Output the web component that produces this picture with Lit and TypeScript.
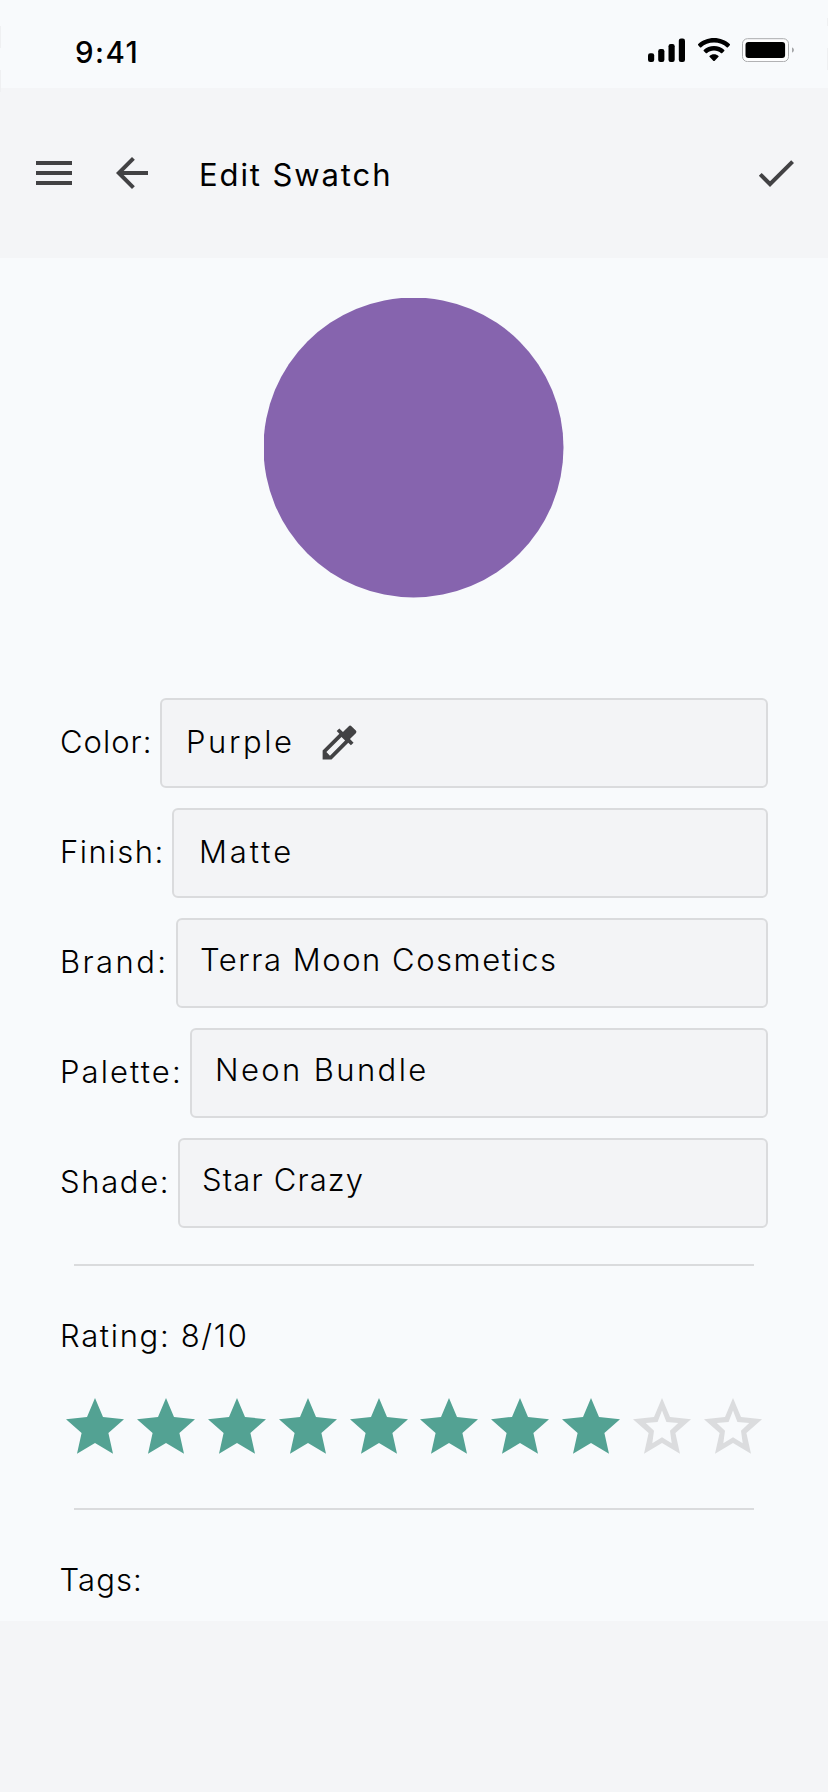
import { LitElement, html, css, svg } from "lit";
import { customElement, property } from "lit/decorators.js";

@customElement("swatch-field")
class SwatchField extends LitElement {
  static styles = css`
    :host { display: flex; height: 90px; }
    .label {
      flex: none;
      box-sizing: border-box;
      height: 90px;
      line-height: 88px;
      white-space: nowrap;
    }
    .box {
      flex: 1;
      box-sizing: border-box;
      height: 90px;
      border: 2px solid #dadbdd;
      border-radius: 6px;
      background: #f3f4f6;
      display: flex;
      white-space: nowrap;
      line-height: 84px;
    }
    .raised { line-height: 80px; }
    ::slotted(svg) { flex: none; }
  `;
  @property() label = "";
  @property() value = "";
  @property({ type: Number }) labelWidth = 100;
  @property({ type: Number }) labelSpacing = 0;
  @property({ type: Number }) valueSpacing = 0;
  @property({ type: Number }) inset = 24;
  @property({ type: Boolean }) raised = false;

  render() {
    return html`
      <div class="label" style="width:${this.labelWidth}px;letter-spacing:${this.labelSpacing}px">${this.label}</div>
      <div class="box ${this.raised ? "raised" : ""}" style="padding-left:${this.inset}px">
        <span style="letter-spacing:${this.valueSpacing}px">${this.value}</span><slot></slot>
      </div>`;
  }
}

const FIELDS = [
  { label: "Color:", value: "Purple", w: 100, ls: 1, vs: 2.6, inset: 24, raised: false, picker: true },
  { label: "Finish:", value: "Matte", w: 112, ls: 1.55, vs: 2.95, inset: 25, raised: false, picker: false },
  { label: "Brand:", value: "Terra Moon Cosmetics", w: 116, ls: 2.4, vs: 1.53, inset: 22, raised: true, picker: false },
  { label: "Palette:", value: "Neon Bundle", w: 130, ls: 2.1, vs: 2.39, inset: 23, raised: true, picker: false },
  { label: "Shade:", value: "Star Crazy", w: 118, ls: 1.65, vs: 1.15, inset: 22, raised: true, picker: false },
];

@customElement("app-root")
class AppRoot extends LitElement {
  static styles = css`
    :host {
      display: block;
      width: 828px;
      height: 1792px;
      overflow: hidden;
      background: #f4f5f7;
      color: #000;
      font: 300 31px Inter, "Open Sans", sans-serif;
    }
    svg { display: block; flex: none; }
    .screen { position: relative; display: flex; flex-direction: column; height: 1621px; background: #f8fafc; }
    .status {
      height: 88px;
      box-sizing: border-box;
      padding: 0 34px 0 75px;
      display: flex;
      justify-content: space-between;
    }
    .time { font-size: 29.5px; font-weight: 500; letter-spacing: 1.5px; line-height: 105px; }
    .indicators { display: flex; gap: 12.5px; padding-top: 38px; }
    .header {
      height: 170px;
      box-sizing: border-box;
      padding: 61px 28px 0 30px;
      background: #f4f5f7;
      display: flex;
    }
    .icon { fill: #424244; }
    .menu { margin-right: 30px; }
    .title { font-weight: 400; letter-spacing: 1.9px; line-height: 51px; margin-left: 43px; flex: 1; white-space: nowrap; }
    .swatch { margin: 40px 0 100px 264px; }
    .fields { display: flex; flex-direction: column; gap: 20px; padding: 0 60px; }
    .picker { margin: 20px 0 0 22.5px; }
    .rule { height: 2px; margin: 36px 74px 0; background: #dadbdd; }
    .rating { margin: 50px 0 0 60px; line-height: 40px; letter-spacing: 1.67px; }
    .stars { display: flex; gap: 12.8px; margin: 41.6px 0 0 66.4px; }
    .on { fill: #53a293; }
    .off { fill: #dbdcde; fill-rule: evenodd; }
    .second { margin-top: 54.4px; }
    .tags { margin: 50px 0 0 59.5px; line-height: 40px; letter-spacing: 1.1px; }
    .edge { position: absolute; top: 0; width: 1px; height: 92px; }
    .left { left: 0; background: linear-gradient(transparent 26px, #eff0f2 26px 48px, transparent 48px 70px, #eff0f2 70px); }
    .right { right: 0; height: 70px; background: linear-gradient(transparent 18px, #eff0f2 18px 26px, transparent 26px 48px, #eff0f2 48px); }
  `;

  private star(on: boolean) {
    const outer = "M29 0 37 18.9 58 21.2 42.4 34.9 47 55.8 29 45 11 55.8 15.6 34.9 0 21.2 21 18.9Z";
    const inner = "M29 12.4 24.6 24 12.8 25 21 32.8 19.3 45.2 29 39.2 38.7 45.2 37 32.8 45.2 25 33.4 24Z";
    return html`<svg width="58" height="56" viewBox="0 0 58 56">${on
      ? svg`<path class="on" d=${outer}></path>`
      : svg`<path class="off" d=${outer + inner}></path>`}</svg>`;
  }

  render() {
    return html`
      <div class="screen">
        <div class="status">
          <span class="time">9:41</span>
          <div class="indicators">
            <svg width="38" height="24" viewBox="0 0 38 24">
              <rect x="1" y="15.3" width="6.2" height="8.7" rx="2.2"></rect>
              <rect x="11.2" y="11" width="6.2" height="13" rx="2.2"></rect>
              <rect x="21.5" y="6" width="6.2" height="18" rx="2.2"></rect>
              <rect x="31.8" y="0.6" width="6.2" height="23.4" rx="2.2"></rect>
            </svg>
            <svg width="32" height="24" viewBox="0 0 32 24">
              <path d="M16 0C22.2 0 27.8 2.3 32 6.2Q32.3 6.7 32 7.1L29.8 9.4Q29.4 9.7 29 9.4C25.5 6.2 21 4.5 16 4.5S6.5 6.2 3 9.4Q2.6 9.7 2.2 9.4L0 7.1Q-.3 6.7 0 6.2C4.2 2.3 9.8 0 16 0Z"></path>
              <path d="M16 8C20 8 23.6 9.5 26.3 12.1Q26.6 12.5 26.3 12.9L24 15.2Q23.6 15.5 23.2 15.2C21.2 13.4 18.7 12.4 16 12.4S10.8 13.4 8.8 15.2Q8.4 15.5 8 15.2L5.7 12.9Q5.4 12.5 5.7 12.1C8.4 9.5 12 8 16 8Z"></path>
              <path d="M16 16.3C17.7 16.3 19.3 16.9 20.5 17.9Q20.9 18.4 20.5 18.8L16.5 22.9Q16 23.3 15.5 22.9L11.5 18.8Q11.1 18.4 11.5 17.9C12.7 16.9 14.3 16.3 16 16.3Z"></path>
            </svg>
            <svg width="52" height="24" viewBox="0 0 52 24">
              <rect x=".5" y=".7" width="46" height="22.9" rx="5" fill="#fdfdfe" stroke="#aaabad"></rect>
              <rect x="3.5" y="4" width="39.6" height="16" rx="3"></rect>
              <path d="M50 9.2Q52 10.2 52 12T50 14.8Z" fill="#a5a6a8"></path>
            </svg>
          </div>
        </div>
        <div class="header">
          <svg class="icon menu" width="48" height="48" viewBox="0 0 24 24"><path d="M3 18h18v-2H3v2zm0-5h18v-2H3v2zm0-7v2h18V6H3z"></path></svg>
          <svg class="icon" width="48" height="48" viewBox="0 0 24 24"><path d="M20 11H7.83l5.59-5.59L12 4l-8 8 8 8 1.41-1.41L7.83 13H20v-2z"></path></svg>
          <div class="title">Edit Swatch</div>
          <svg class="icon" width="48" height="48" viewBox="0 0 24 24"><path d="M9 16.17L4.83 12l-1.42 1.41L9 19 21 7l-1.41-1.41z"></path></svg>
        </div>
        <svg class="swatch" width="300" height="300" viewBox="0 0 300 300"><circle cx="149.5" cy="149.5" r="150" fill="#8664ae"></circle></svg>
        <div class="fields">
          ${FIELDS.map((f) => html`
            <swatch-field .label=${f.label} .value=${f.value} .labelWidth=${f.w} .labelSpacing=${f.ls}
              .valueSpacing=${f.vs} .inset=${f.inset} .raised=${f.raised}>${f.picker
                ? html`<svg class="icon picker" width="45" height="45" viewBox="0 0 24 24"><path d="M20.71 5.63l-2.34-2.34c-.39-.39-1.02-.39-1.41 0l-3.12 3.12-1.93-1.91-1.41 1.41 1.42 1.42L3 16.25V21h4.75l8.92-8.92 1.42 1.42 1.41-1.41-1.92-1.92 3.12-3.12c.4-.4.4-1.03.01-1.42zM6.92 19L5 17.08l8.06-8.06 1.92 1.92L6.92 19z"></path></svg>`
                : ""}</swatch-field>`)}
        </div>
        <div class="rule"></div>
        <div class="rating">Rating: 8/10</div>
        <div class="stars">${Array.from({ length: 10 }, (_, i) => this.star(i < 8))}</div>
        <div class="rule second"></div>
        <div class="tags">Tags:</div>
        <div class="edge left"></div>
        <div class="edge right"></div>
      </div>`;
  }
}
